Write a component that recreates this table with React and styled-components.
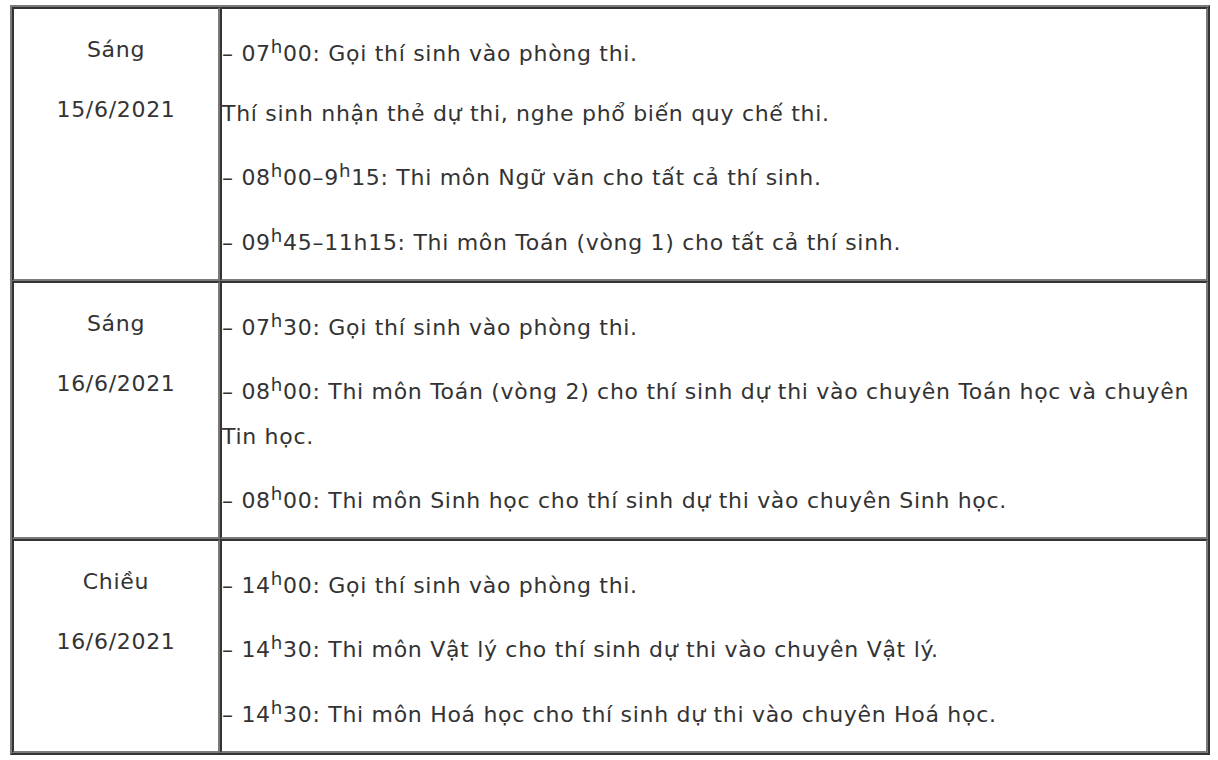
import styled, { createGlobalStyle } from "styled-components";

const GlobalStyle = createGlobalStyle`
  body {
    margin: 0;
    background: #fff;
    font-family: "DejaVu Sans", "Noto Sans", sans-serif;
    color: #333;
  }
`;

// lich thi: moi buoi mot dong, cot trai la ngay, cot phai la cac muc
const schedule = [
  {
    session: "Sáng",
    date: "15/6/2021",
    items: [
      ["– 07", "h", "00: Gọi thí sinh vào phòng thi."],
      ["Thí sinh nhận thẻ dự thi, nghe phổ biến quy chế thi."],
      ["– 08", "h", "00–9", "h", "15: Thi môn Ngữ văn cho tất cả thí sinh."],
      ["– 09", "h", "45–11h15: Thi môn Toán (vòng 1) cho tất cả thí sinh."],
    ],
  },
  {
    session: "Sáng",
    date: "16/6/2021",
    items: [
      ["– 07", "h", "30: Gọi thí sinh vào phòng thi."],
      [
        "– 08",
        "h",
        "00: Thi môn Toán (vòng 2) cho thí sinh dự thi vào chuyên Toán học và chuyên Tin học.",
      ],
      ["– 08", "h", "00: Thi môn Sinh học cho thí sinh dự thi vào chuyên Sinh học."],
    ],
  },
  {
    session: "Chiều",
    date: "16/6/2021",
    items: [
      ["– 14", "h", "00: Gọi thí sinh vào phòng thi."],
      ["– 14", "h", "30: Thi môn Vật lý cho thí sinh dự thi vào chuyên Vật lý."],
      ["– 14", "h", "30: Thi môn Hoá học cho thí sinh dự thi vào chuyên Hoá học."],
    ],
  },
];

const App = () => {
  return (
    <Page>
      <GlobalStyle />
      <Table>
        <tbody>
          {schedule.map((row, i) => (
            <tr key={i}>
              <DateCell>
                <Para $center>{row.session}</Para>
                <Para $center>{row.date}</Para>
              </DateCell>
              <Cell>
                {row.items.map((parts, j) => (
                  <Para key={j}>
                    {parts.map((p, k) =>
                      k % 2 === 1 ? <Sup key={k}>{p}</Sup> : <span key={k}>{p}</span>
                    )}
                  </Para>
                ))}
              </Cell>
            </tr>
          ))}
        </tbody>
      </Table>
    </Page>
  );
};

export default App;

const Page = styled.div`
  padding: 5px 0 0 10px;
`;

const Table = styled.table`
  width: 1200px;
  border-collapse: separate;
  border-spacing: 0;
  border: 2px solid;
  border-color: #7a7a7a #333 #333 #7a7a7a;
`;

const Cell = styled.td`
  padding: 3px 0 0;
  vertical-align: top;
  border: 2px solid;
  border-color: #333 #7a7a7a #7a7a7a #333;
`;

const DateCell = styled(Cell)`
  width: 204px;
`;

const Para = styled.p`
  margin: 16px 0;
  font-size: 22px;
  letter-spacing: 0.7px;
  line-height: 44px;
  text-align: ${(p) => (p.$center ? "center" : "left")};

  &:last-child {
    margin-bottom: 14px;
  }
`;

const Sup = styled.sup`
  font-size: 0.83em;
  line-height: 38px;
`;
